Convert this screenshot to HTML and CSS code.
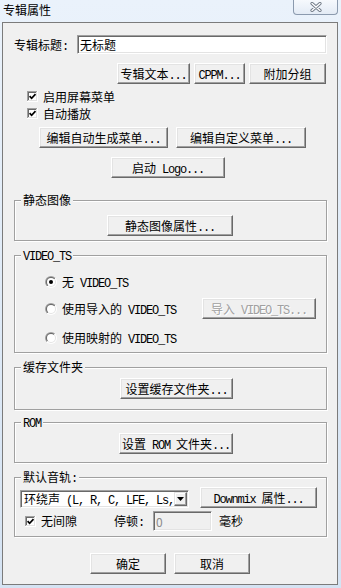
FILE: index.html
```html
<!DOCTYPE html>
<html lang="zh-CN">
<head>
    <meta charset="UTF-8">
    <meta name="viewport" content="width=device-width, initial-scale=1.0">
    <title>专辑属性</title>
    <link rel="stylesheet" href="styles.css">
</head>
<body>
    <svg class="defs" width="0" height="0">
        <defs>
            <linearGradient id="ringOut" x1="0" y1="0" x2="1" y2="1">
                <stop offset="0.5" stop-color="#a0a0a0"/>
                <stop offset="0.5" stop-color="#ffffff"/>
            </linearGradient>
            <linearGradient id="ringIn" x1="0" y1="0" x2="1" y2="1">
                <stop offset="0.5" stop-color="#696969"/>
                <stop offset="0.5" stop-color="#e3e3e3"/>
            </linearGradient>
        </defs>
    </svg>

    <div class="window">
        <div class="titlebar">
            <span class="title">专辑属性</span>
            <div class="close">
                <svg width="12" height="10" viewBox="0 0 12 10">
                    <path d="M2 1.5L10 8.5M10 1.5L2 8.5" stroke="#6f7986" stroke-width="3.2" stroke-linecap="round"/>
                    <path d="M2 1.5L10 8.5M10 1.5L2 8.5" stroke="#ffffff" stroke-width="1.4" stroke-linecap="round"/>
                </svg>
            </div>
        </div>

        <div class="client">
            <div class="row-title">
                <span class="label">专辑标题<span class="en">:</span></span>
                <input class="field title-field" type="text" value="无标题">
            </div>

            <div class="row-buttons">
                <button class="btn w73">专辑文本<span class="en">...</span></button>
                <button class="btn w51"><span class="en">CPPM...</span></button>
                <button class="btn w77">附加分组</button>
            </div>

            <label class="check-row">
                <svg class="chk" width="11" height="11" viewBox="0 0 11 11" shape-rendering="crispEdges">
                    <path d="M0 0h11v11H0z" fill="#fff"/>
                    <path d="M0 0h10v1H1v9H0z" fill="#a0a0a0"/>
                    <path d="M1 1h8v1H2v7H1z" fill="#696969"/>
                    <path d="M9 1h1v9H1V9h8z" fill="#e3e3e3"/>
                    <path d="M2.6 5.2L4.6 7.3L8.5 3.2" stroke="#000" stroke-width="1.7" fill="none" shape-rendering="auto"/>
                </svg>
                <span>启用屏幕菜单</span>
            </label>
            <label class="check-row">
                <svg class="chk" width="11" height="11" viewBox="0 0 11 11" shape-rendering="crispEdges">
                    <path d="M0 0h11v11H0z" fill="#fff"/>
                    <path d="M0 0h10v1H1v9H0z" fill="#a0a0a0"/>
                    <path d="M1 1h8v1H2v7H1z" fill="#696969"/>
                    <path d="M9 1h1v9H1V9h8z" fill="#e3e3e3"/>
                    <path d="M2.6 5.2L4.6 7.3L8.5 3.2" stroke="#000" stroke-width="1.7" fill="none" shape-rendering="auto"/>
                </svg>
                <span>自动播放</span>
            </label>

            <div class="row-menus">
                <button class="btn w129">编辑自动生成菜单<span class="en">...</span></button>
                <button class="btn w130">编辑自定义菜单<span class="en">...</span></button>
            </div>

            <div class="row-logo">
                <button class="btn w114">启动<span class="en"> Logo...</span></button>
            </div>

            <fieldset class="group g-still">
                <legend>静态图像</legend>
                <button class="btn w126">静态图像属性<span class="en">...</span></button>
            </fieldset>

            <fieldset class="group g-video">
                <legend><span class="en">VIDEO_TS</span></legend>
                <div class="radio-row r1">
                    <svg class="radio" width="12" height="12" viewBox="0 0 12 12">
                        <circle cx="6" cy="6" r="6" fill="url(#ringOut)"/>
                        <circle cx="6" cy="6" r="5" fill="url(#ringIn)"/>
                        <circle cx="6" cy="6" r="4" fill="#fff"/>
                        <circle cx="6" cy="6" r="2" fill="#000"/>
                    </svg>
                    <span>无<span class="en"> VIDEO_TS</span></span>
                </div>
                <div class="radio-row r2">
                    <svg class="radio" width="12" height="12" viewBox="0 0 12 12">
                        <circle cx="6" cy="6" r="6" fill="url(#ringOut)"/>
                        <circle cx="6" cy="6" r="5" fill="url(#ringIn)"/>
                        <circle cx="6" cy="6" r="4" fill="#fff"/>
                    </svg>
                    <span>使用导入的<span class="en"> VIDEO_TS</span></span>
                    <button class="btn w114 disabled" disabled>导入<span class="en"> VIDEO_TS...</span></button>
                </div>
                <div class="radio-row r3">
                    <svg class="radio" width="12" height="12" viewBox="0 0 12 12">
                        <circle cx="6" cy="6" r="6" fill="url(#ringOut)"/>
                        <circle cx="6" cy="6" r="5" fill="url(#ringIn)"/>
                        <circle cx="6" cy="6" r="4" fill="#fff"/>
                    </svg>
                    <span>使用映射的<span class="en"> VIDEO_TS</span></span>
                </div>
            </fieldset>

            <fieldset class="group g-cache">
                <legend>缓存文件夹</legend>
                <button class="btn w113">设置缓存文件夹<span class="en">...</span></button>
            </fieldset>

            <fieldset class="group g-rom">
                <legend><span class="en">ROM</span></legend>
                <button class="btn w114">设置<span class="en"> ROM </span>文件夹<span class="en">...</span></button>
            </fieldset>

            <fieldset class="group g-audio">
                <legend>默认音轨<span class="en">:</span></legend>
                <div class="audio-row">
                    <div class="field select">
                        <span class="select-text">环绕声<span class="en"> (L, R, C, LFE, Ls,</span></span>
                        <span class="drop">
                            <svg width="7" height="4" viewBox="0 0 7 4"><path d="M0 0h7L3.5 4z" fill="#000"/></svg>
                        </span>
                    </div>
                    <button class="btn w117 downmix"><span class="en">Downmix </span>属性<span class="en">...</span></button>
                </div>
                <div class="gap-row">
                    <label class="gap-check">
                        <svg class="chk" width="11" height="11" viewBox="0 0 11 11" shape-rendering="crispEdges">
                            <path d="M0 0h11v11H0z" fill="#fff"/>
                            <path d="M0 0h10v1H1v9H0z" fill="#a0a0a0"/>
                            <path d="M1 1h8v1H2v7H1z" fill="#696969"/>
                            <path d="M9 1h1v9H1V9h8z" fill="#e3e3e3"/>
                            <path d="M2.6 5.2L4.6 7.3L8.5 3.2" stroke="#000" stroke-width="1.7" fill="none" shape-rendering="auto"/>
                        </svg>
                        <span>无间隙</span>
                    </label>
                    <span class="pause-label">停顿<span class="en">:</span></span>
                    <input class="field pause-field en" type="text" value="0" disabled>
                    <span class="unit">毫秒</span>
                </div>
            </fieldset>

            <div class="row-ok">
                <button class="btn w76">确定</button>
                <button class="btn w76">取消</button>
            </div>
        </div>
    </div>
</body>
</html>
```

FILE: styles.css
```css
* {
    box-sizing: border-box;
}
body {
    margin: 0;
    font-family: "Noto Sans CJK SC", "Noto Sans", sans-serif;
    font-size: 12px;
    line-height: 14px;
    color: #000;
}
.defs {
    position: absolute;
}
.en {
    font-family: "Liberation Mono", "Noto Sans CJK SC", monospace;
    letter-spacing: -1.2px;
    line-height: 10px;
}
.window {
    width: 341px;
    height: 588px;
    background: linear-gradient(#eaf2fb, #d5e3f3);
    display: flex;
    flex-direction: column;
}
.titlebar {
    height: 22px;
    display: flex;
    justify-content: space-between;
    align-items: flex-start;
    padding: 0 3px;
}
.title {
    margin-top: 3px;
}
.close {
    width: 45px;
    height: 15px;
    border: 1px solid #8b9aae;
    border-top: none;
    border-radius: 0 0 4px 4px;
    background: linear-gradient(#f6f9fd, #e3ebf5);
    display: flex;
    justify-content: center;
    align-items: center;
}
.client {
    margin-left: 2px;
    width: 336px;
    height: 563px;
    border: 1px solid #7b7b7b;
    background: #f0f0f0;
    padding: 0 10px 0 11px;
    display: flex;
    flex-direction: column;
}

/* controls */
.btn {
    height: 21px;
    padding: 0;
    margin: 0;
    font: inherit;
    color: #000;
    background: #f0f0f0;
    border: 1px solid;
    border-color: #fff #696969 #696969 #fff;
    box-shadow: inset -1px -1px 0 #a0a0a0, inset 1px 1px 0 #e3e3e3;
    border-radius: 0;
    white-space: pre;
}
.btn.disabled {
    color: #a0a0a0;
    text-shadow: 1px 1px 0 #fff;
}
.w51 { width: 51px; }
.w73 { width: 73px; }
.w76 { width: 76px; }
.w77 { width: 77px; }
.w113 { width: 113px; }
.w114 { width: 114px; }
.w117 { width: 117px; }
.w126 { width: 126px; }
.w129 { width: 129px; }
.w130 { width: 130px; }
.field {
    font: inherit;
    margin: 0;
    border: 1px solid;
    border-color: #a0a0a0 #fff #fff #a0a0a0;
    box-shadow: inset 1px 1px 0 #696969, inset -1px -1px 0 #e3e3e3;
    background: #fff;
    outline: none;
}

/* top area */
.row-title {
    margin-top: 12px;
    height: 19px;
    display: flex;
    align-items: center;
}
.label {
    width: 63px;
}
.title-field {
    width: 250px;
    height: 19px;
    padding: 0 2px;
}
.row-buttons {
    margin-top: 9px;
    display: flex;
    justify-content: flex-end;
    gap: 4px;
    padding-right: 1px;
}
.check-row {
    height: 17px;
    display: flex;
    align-items: center;
    gap: 5px;
    padding-left: 13px;
}
.check-row:first-of-type {
    margin-top: 4px;
}
.row-menus {
    margin-top: 5px;
    display: flex;
    gap: 8px;
    padding-left: 25px;
}
.row-logo {
    margin-top: 9px;
    padding-left: 97px;
}

/* group boxes */
.group {
    margin: 7px 0 0 0;
    padding: 0;
    min-width: 0;
    border: 1px solid #a0a0a0;
    box-shadow: 1px 1px 0 #fff, inset 1px 1px 0 #fff;
}
.group legend {
    margin-left: 6px;
    padding: 0 2px;
    height: 14px;
    line-height: 14px;
    background: #f0f0f0;
}
.g-still {
    margin-top: 15px;
    padding-bottom: 4px;
}
.g-still .btn {
    margin: 8px 0 0 92px;
}
.g-video {
    padding-bottom: 7px;
}
.radio-row {
    display: flex;
    align-items: center;
    padding-left: 30px;
}
.radio-row .radio {
    margin-right: 5px;
}
.r1 {
    margin-top: 13px;
    height: 14px;
}
.r2 {
    margin-top: 9px;
    height: 21px;
}
.r2 .btn {
    margin-left: auto;
    margin-right: 10px;
}
.r3 {
    margin-top: 12px;
    height: 14px;
}
.g-cache {
    padding-bottom: 10px;
}
.g-cache .btn {
    margin: 4px 0 0 105px;
}
.g-rom {
    margin-top: 5px;
    padding-bottom: 8px;
}
.g-rom .btn {
    margin: 4px 0 0 104px;
}
.g-audio {
    padding-bottom: 5px;
}
.audio-row {
    margin-top: 3px;
    height: 21px;
    display: flex;
    align-items: flex-end;
    padding-left: 5px;
}
.select {
    width: 169px;
    height: 18px;
    display: flex;
    align-items: center;
    padding: 0 1px 0 3px;
}
.select-text {
    white-space: pre;
}
.drop {
    margin-left: auto;
    width: 13px;
    height: 14px;
    border: 1px solid;
    border-color: #e3e3e3 #696969 #696969 #e3e3e3;
    box-shadow: inset -1px -1px 0 #a0a0a0, inset 1px 1px 0 #fff;
    background: #f0f0f0;
    display: flex;
    justify-content: center;
    align-items: center;
}
.downmix {
    margin-left: 11px;
}
.gap-row {
    margin-top: 3px;
    height: 20px;
    display: flex;
    align-items: center;
}
.gap-check {
    display: flex;
    align-items: center;
    gap: 5px;
    margin-left: 10px;
    width: 89px;
}
.pause-label {
    width: 39px;
}
.pause-field {
    width: 59px;
    height: 20px;
    padding: 0 2px;
    background: #f0f0f0;
    color: #8a8a8a;
}
.unit {
    margin-left: 7px;
}

/* bottom */
.row-ok {
    margin-top: 16px;
    display: flex;
    gap: 8px;
    padding-left: 76px;
}
```
